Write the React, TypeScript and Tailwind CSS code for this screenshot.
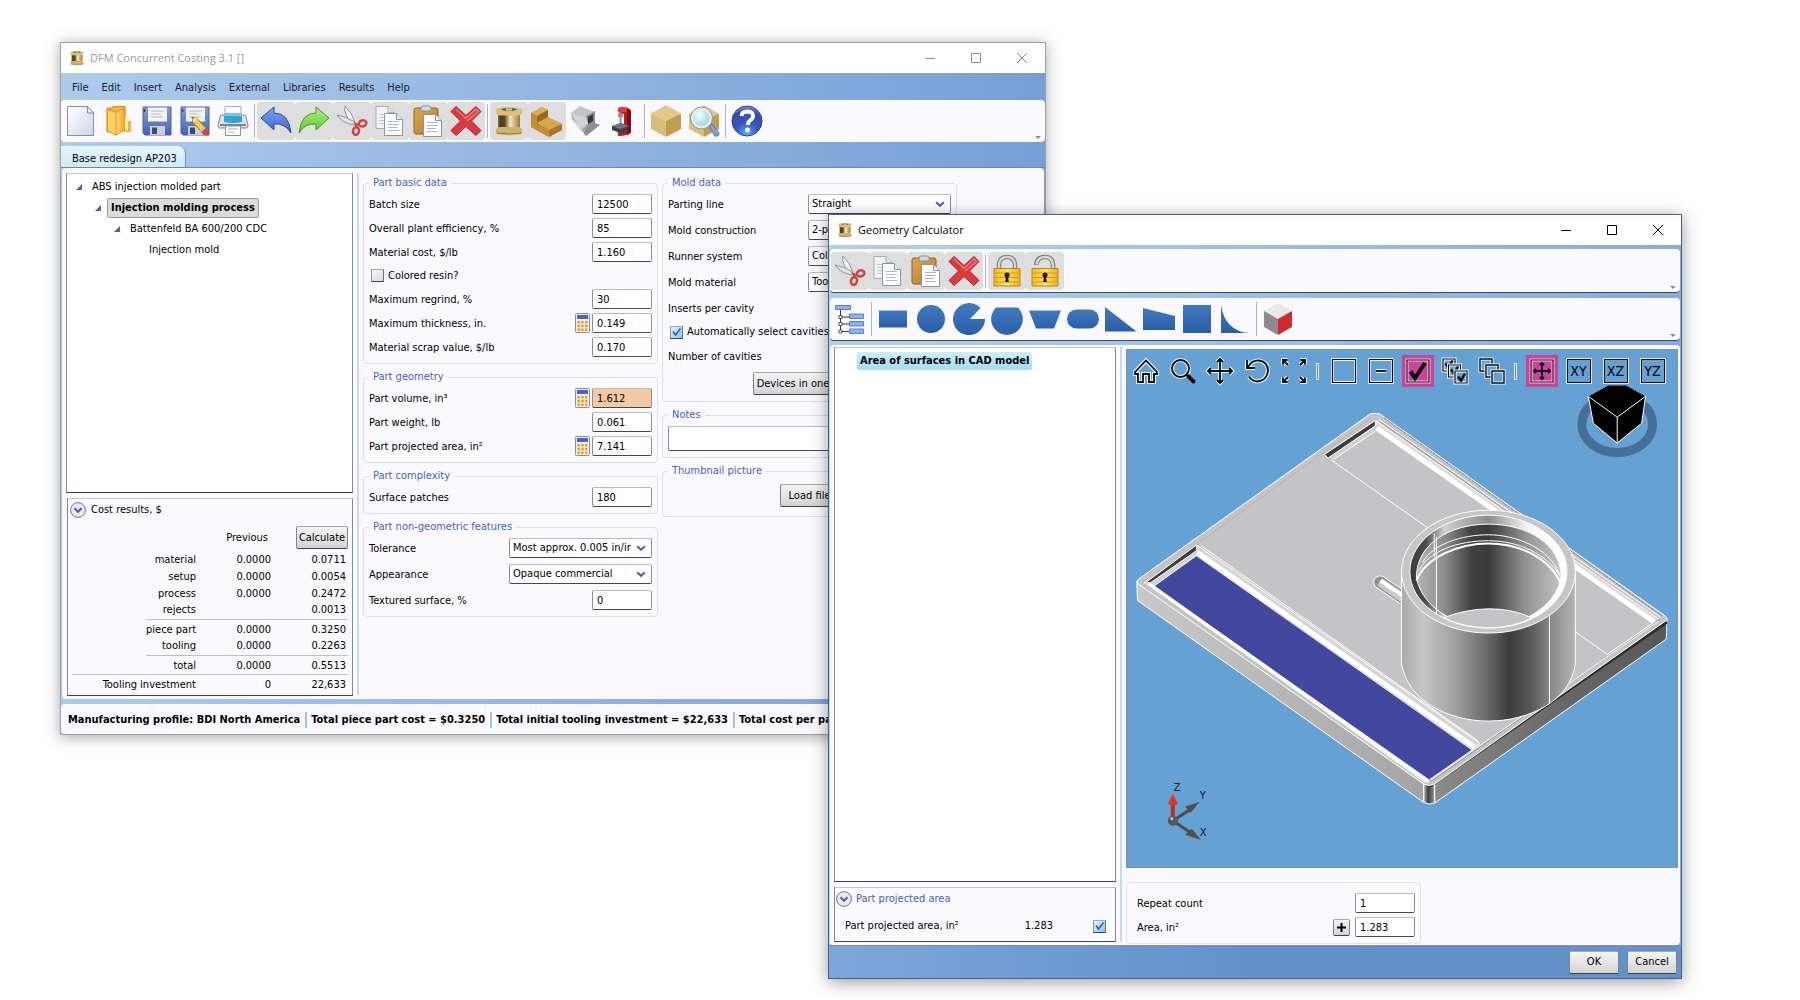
import { useId, useState } from 'react';
import type { ReactNode } from 'react';

type Tone = 'plain' | 'gray';

const boxClass =
  'h-5 rounded-[2px] border border-x-[#8b8e96] border-t-[#b9bbc2] border-b-[#45474f] px-1 text-[11px] leading-4 text-black outline-none';

const buttonClass =
  'flex items-center justify-center rounded-[2px] border border-x-[#808388] border-t-[#a5a7ab] border-b-[#3f4145] bg-gradient-to-b from-[#f4f4f4] via-[#e6e6e6] to-[#d2d2d2] text-[11px] leading-4 text-black whitespace-nowrap';

const panelClass = 'border border-x-[#84878f] border-t-[#c3c5cb] border-b-[#3f4148]';

/* ---------- shared gradients ---------- */

function Defs() {
  return (
    <svg className="absolute h-0 w-0" aria-hidden="true">
      <defs>
        <linearGradient id="spool" x1="0" x2="1">
          <stop offset="0" stopColor="#8a7038" />
          <stop offset=".12" stopColor="#4a3a1c" />
          <stop offset=".3" stopColor="#5a4724" />
          <stop offset=".55" stopColor="#f4e6b8" />
          <stop offset=".8" stopColor="#c9ae6c" />
          <stop offset="1" stopColor="#8f7438" />
        </linearGradient>
        <linearGradient id="paper" x1="0" y1="0" x2="1" y2="1">
          <stop offset="0" stopColor="#ffffff" />
          <stop offset="1" stopColor="#ccd6ee" />
        </linearGradient>
        <linearGradient id="folder" x1="0" x2="1">
          <stop offset="0" stopColor="#ffe08a" />
          <stop offset="1" stopColor="#f0a51c" />
        </linearGradient>
        <linearGradient id="floppy" x1="0" y1="0" x2="0" y2="1">
          <stop offset="0" stopColor="#7f9fdc" />
          <stop offset="1" stopColor="#4663ae" />
        </linearGradient>
        <linearGradient id="undo" x1="0" y1="0" x2="0" y2="1">
          <stop offset="0" stopColor="#7ea6ee" />
          <stop offset="1" stopColor="#3f63c4" />
        </linearGradient>
        <linearGradient id="redo" x1="0" y1="0" x2="0" y2="1">
          <stop offset="0" stopColor="#b6ee88" />
          <stop offset="1" stopColor="#5cc32c" />
        </linearGradient>
        <linearGradient id="clip" x1="0" y1="0" x2="1" y2="1">
          <stop offset="0" stopColor="#dca752" />
          <stop offset="1" stopColor="#b87a24" />
        </linearGradient>
        <linearGradient id="gold" x1="0" x2="1">
          <stop offset="0" stopColor="#f2b61d" />
          <stop offset=".5" stopColor="#ffe468" />
          <stop offset="1" stopColor="#eeb01c" />
        </linearGradient>
        <linearGradient id="shape" x1="0" y1="0" x2="0" y2="1">
          <stop offset="0" stopColor="#4179c0" />
          <stop offset="1" stopColor="#2a5fa6" />
        </linearGradient>
        <radialGradient id="help" cx=".5" cy=".9" r=".9">
          <stop offset="0" stopColor="#58b4f2" />
          <stop offset=".4" stopColor="#3957b8" />
          <stop offset=".8" stopColor="#3a4aa8" />
          <stop offset="1" stopColor="#7f97dc" />
        </radialGradient>
        <radialGradient id="glass" cx=".4" cy=".35" r=".7">
          <stop offset="0" stopColor="#f3ffff" />
          <stop offset="1" stopColor="#8fd0d8" />
        </radialGradient>
      </defs>
    </svg>
  );
}

/* ---------- toolbar icons ---------- */

function Icon({ children, className = 'h-8 w-8' }: { children: ReactNode; className?: string }) {
  return (
    <svg viewBox="0 0 32 32" className={className} fill="none" aria-hidden="true">
      {children}
    </svg>
  );
}

function SpoolArt() {
  return (
    <>
      <path d="M5 7h22v18H5z" fill="url(#spool)" />
      <path d="M3 3.500q13-3 26 0v5q-2 2-4 2H7q-2 0-4-2z" fill="#d9bf80" />
      <path d="M8 4q8-2 16 0-2 2-8 2T8 4z" fill="#6b5322" />
      <path d="M13 3.500h6v2h-6z" fill="#e8d59b" />
      <path d="M3 24q2-2 4-2h18q2 0 4 2v5q-13 2.500-26 0z" fill="#d0b373" />
      <path d="M4 28q12 2 24 0" stroke="#9a7b3c" />
    </>
  );
}

function FloppyArt() {
  return (
    <>
      <path d="M2 2h28v28H4l-2-2z" fill="url(#floppy)" stroke="#4a5f9e" />
      <path d="M7 2.500h19v14H7z" fill="#f4f4f4" />
      <path d="M10 6h13M10 9h10M10 12h12" stroke="#b8bcc6" />
      <path d="M9 21h15v9H9z" fill="#c9ced9" />
      <path d="M11 22.500h5V29h-5z" fill="#3c486e" />
      <path d="M3.500 4v3" stroke="#2b3b78" strokeWidth="1.500" />
    </>
  );
}

function PageArt() {
  return (
    <>
      <path d="M0 0h12l6 6v16H0z" fill="#fff" stroke="#8f939b" />
      <path d="M12 0v6h6" fill="#e8eaef" stroke="#8f939b" />
      <path d="M3.500 8h11M3.500 11h11M3.500 14h9M3.500 17h11" stroke="#a9b6cf" />
    </>
  );
}

const icons: Record<string, ReactNode> = {
  spool: <SpoolArt />,
  newFile: (
    <>
      <path d="M2.500 1.500h20l6 6.500v22.500h-26z" fill="url(#paper)" stroke="#8b8e96" />
      <path d="M22.500 1.500V8h6z" fill="#f1f2f5" stroke="#8b8e96" />
    </>
  ),
  open: (
    <>
      <path d="M21 16h7v11h-7z" fill="#f1b24a" />
      <path d="M4 3h5l1-1.500h12V25l-10 2H4z" fill="#f5b637" stroke="#d6891a" />
      <path d="M12 7l10-4v22l-10 5.500z" fill="url(#folder)" stroke="#dd9623" />
      <path d="M6 5.500h4M4.500 3.500L13 8v22L4.500 26z" fill="#fbd468" stroke="#dd9623" />
      <path d="M22 12l3 1v12l-3 1z" fill="#ffe7a6" />
    </>
  ),
  save: <FloppyArt />,
  saveAs: (
    <>
      <FloppyArt />
      <path d="M13 12l5 1.500 11 12-4 4-11-12z" fill="#f6ce3e" stroke="#8f7a35" />
      <path d="M13 12l5 1.500-3.500 4z" fill="#f6e7c6" />
      <path d="M13 12l2 .7-1.200 1.400z" fill="#333" />
      <path d="M26.500 23l3.500 4q.5 2-1.500 3.500-2 .5-3-.5l-3-3z" fill="#d9433f" />
      <path d="M25 21.500l1.500 1.500-4 4-1.500-1.500z" fill="#b9c1d4" />
    </>
  ),
  print: (
    <>
      <path d="M8 1.500h16V10H8z" fill="#fff" stroke="#a5a9b2" />
      <path d="M3 12q0-2 2-2h22q2 0 2 2l2 8q0 3-2 3H3q-2 0-2-3z" fill="#dfe2e8" stroke="#80858f" />
      <path d="M7 8h18v9q-9 2-18 0z" fill="#37a3cf" />
      <path d="M7 8h18v3H7z" fill="#6fc8e8" />
      <path d="M3 20h26" stroke="#7d828c" strokeWidth="2" />
      <path d="M8.500 21h15v9.500h-15z" fill="#fff" stroke="#8b8f98" />
      <path d="M11 24h10M11 27h7" stroke="#a9adb6" />
    </>
  ),
  undo: (
    <path
      d="M1 13L14 2v6q15 0 17 20-6-10-17-9v6z"
      fill="url(#undo)"
      stroke="#2c4a9e"
      strokeLinejoin="round"
    />
  ),
  redo: (
    <path
      d="M31 13L18 2v6Q3 8 1 28q6-10 17-9v6z"
      fill="url(#redo)"
      stroke="#3f9d22"
      strokeLinejoin="round"
    />
  ),
  cut: (
    <>
      <path d="M9 1q-2 7 7 18l3-2Q16 8 9 1z" fill="#f2f4f5" stroke="#8f9599" />
      <path d="M1 10q5 8 17 10l1-3Q9 11 1 10z" fill="#e2e5e7" stroke="#8f9599" />
      <ellipse cx="26.500" cy="18.500" rx="3.800" ry="3" transform="rotate(-15 26 18)" stroke="#d0413f" strokeWidth="2.500" />
      <ellipse cx="20" cy="26" rx="3" ry="3.800" transform="rotate(15 20 26)" stroke="#d0413f" strokeWidth="2.500" />
      <path d="M17 17l6 2-3 3.500z" fill="#d0413f" />
    </>
  ),
  copy: (
    <>
      <g transform="translate(2 1.500)" opacity=".65">
        <PageArt />
      </g>
      <g transform="translate(10.500 8.500)">
        <PageArt />
      </g>
    </>
  ),
  paste: (
    <>
      <path d="M2 5q0-2 2-2h20q2 0 2 2v22q0 2-2 2H4q-2 0-2-2z" fill="url(#clip)" stroke="#8f6322" />
      <path d="M9 3q0-2 2-2h6q2 0 2 2v3H9z" fill="#d4d7db" stroke="#8d9197" />
      <g transform="translate(11.500 9.500)">
        <PageArt />
      </g>
    </>
  ),
  remove: (
    <>
      <path
        d="M6 1.500l10 9 10-9 5 5-9.500 9.500 9.500 9.500-5 5-10-9-10 9-5-5L10.500 16 1 6.500z"
        fill="#d93a3f"
        stroke="#a92429"
        strokeLinejoin="round"
      />
      <path d="M6 4l10 9.500L26 4l2.500 2.500L17 16" stroke="#ec7b7d" strokeWidth="1.500" />
    </>
  ),
  step: (
    <>
      <path d="M0 8l11-6 6 3v8l14 6v6l-13 7L0 22z" fill="#b07d2c" />
      <path d="M0 8l11-6 6 3-11 6z" fill="#dcae5b" />
      <path d="M6 11l11-6v8l-11 6z" fill="#9a6a20" />
      <path d="M6 18l11-6 14 7-13 6z" fill="#d8a64c" />
      <path d="M18 25l13-6v6l-13 7z" fill="#a8752a" />
      <path d="M0 8l6 3v8l12 6v7L0 22z" fill="#c58f38" />
    </>
  ),
  extrusion: (
    <>
      <path d="M2 8l9-7 15 6-8 6z" fill="#c3c6c9" />
      <path d="M2 8l16 5v6l12 0-13 12L3 14z" fill="#a5a8ab" />
      <path d="M2 8l16 5v6L11 26z" fill="#d2d4d6" />
      <path d="M17 11l9-5v12l5 2-14 11-2-3 4-8z" fill="#8c8f92" />
      <path d="M19 12l5-3v7l-5 3z" fill="#33363a" />
    </>
  ),
  clamp: (
    <>
      <path d="M11 3q8-3 13 2v22q-2 4-13 4v-4l6-2V9l-6-2z" fill="#c0161d" />
      <path d="M20 4q4 2 4 4v19q-1 2-4 3z" fill="#7c0b10" />
      <path d="M11 3q5-2 9 0v4h-9z" fill="#e33a3c" />
      <path d="M11 8h5v4h-5zM12.500 12h2v7h-2z" fill="#8f9498" />
      <path d="M5 21l9-3 8 3-2 5-7 2-8-3z" fill="#3d4246" />
      <path d="M5 21l9-3 8 3-9 3z" fill="#70777c" />
    </>
  ),
  block: (
    <>
      <path d="M16 0l15 8.500L16 16 1 8.500z" fill="#e2c98a" />
      <path d="M1 8.500L16 16v16L1 24z" fill="#d9bd7c" />
      <path d="M31 8.500L16 16v16l15-8z" fill="#c09c55" />
    </>
  ),
  inspect: (
    <>
      <path d="M1 8.500L16 0l15 8.500L16 16z" fill="#e2c98a" />
      <path d="M1 8.500L16 16v16L1 24z" fill="#d9bd7c" />
      <path d="M31 8.500L16 16v16l15-8z" fill="#c09c55" />
      <path d="M21 21l3-2 7 9q0 4-4 3z" fill="#7ba4e4" stroke="#5674b4" />
      <circle cx="13.500" cy="13" r="9.500" fill="url(#glass)" stroke="#e9ecee" strokeWidth="3" />
      <circle cx="13.500" cy="13" r="11" stroke="#8c9298" />
    </>
  ),
  help: (
    <>
      <circle cx="16" cy="16" r="15" fill="url(#help)" stroke="#2f3f92" />
      <path d="M10.500 11q.5-4.500 6-4.500 5.500.3 5.500 4.500 0 2.500-3 4.500-2.200 1.500-2.200 4.500" stroke="#fff" strokeWidth="3.800" />
      <circle cx="16.600" cy="25" r="2.400" fill="#fff" />
    </>
  ),
  locked: (
    <>
      <path d="M8 15V9q1-7 8-7t8 7v6" stroke="#777b7e" strokeWidth="4.500" />
      <path d="M8 15V9q1-7 8-7t8 7v6" stroke="#d2d6d8" strokeWidth="2.500" />
      <path d="M3 13.500h26V31H3z" fill="url(#gold)" stroke="#bd8412" />
      <path d="M3 18h26M3 22.500h26M3 27h26" stroke="#d49a18" />
      <circle cx="16" cy="20" r="2.600" fill="#222" />
      <path d="M15 21h2l.8 6h-3.600z" fill="#222" />
    </>
  ),
  unlocked: (
    <>
      <path d="M7 10q1-8 9-8t8 8v5" stroke="#777b7e" strokeWidth="4.500" />
      <path d="M7.500 9.500Q8.500 2 16 2t8 8v5" stroke="#d2d6d8" strokeWidth="2.500" />
      <path d="M3 13.500h26V31H3z" fill="url(#gold)" stroke="#bd8412" />
      <path d="M3 18h26M3 22.500h26M3 27h26" stroke="#d49a18" />
      <circle cx="16" cy="20" r="2.600" fill="#222" />
      <path d="M15 21h2l.8 6h-3.600z" fill="#222" />
    </>
  ),
  hierarchy: (
    <>
      <path d="M6.500 7v21M6.500 14h10M6.500 21h10M6.500 28.500h10" stroke="#333" />
      <path d="M1.500 2.500h15v4h-15zM15.500 11h14v4.500h-14zM15.500 18.500h14V23h-14zM15.500 26h14v4.500h-14z" fill="#8fb1ee" stroke="#5d7fc8" />
      <path d="M5 12.500h3v3H5zM5 19.500h3v3H5zM5 27h3v3H5z" fill="#fff" stroke="#555" />
    </>
  ),
  rectangle: <path d="M2 7.500h28v17H2z" fill="url(#shape)" />,
  circle: <circle cx="16" cy="16" r="14" fill="url(#shape)" />,
  sector: <path d="M17 16L27.500 5A16 16 0 1 0 32 16z" fill="url(#shape)" />,
  segment: <path d="M5 4.500h22A16 16 0 0 1 16 32 16 16 0 0 1 5 4.500z" fill="url(#shape)" />,
  trapezoid: <path d="M0 7.500h32l-7 18H7z" fill="url(#shape)" />,
  slot: <rect y="6.500" width="32" height="19" rx="9.500" fill="url(#shape)" />,
  triangle: <path d="M0 4v24.500h31.500z" fill="url(#shape)" />,
  wedge: <path d="M0 5l32 8v14H0z" fill="url(#shape)" />,
  square: <path d="M2 2h28v28H2z" fill="url(#shape)" />,
  fillet: <path d="M2 2v28h28Q6 28 2 2z" fill="url(#shape)" />,
  redCube: (
    <>
      <path d="M16 0l14 8-14 8L2 8z" fill="#e9e9e9" />
      <path d="M2 8l14 8v16L2 24z" fill="#8c8c8c" />
      <path d="M30 8l-14 8v16l14-8z" fill="#cc2c30" />
    </>
  ),
};

function ToolButton({ name, label, tone = 'plain' }: { name: string; label: string; tone?: Tone }) {
  return (
    <button
      type="button"
      aria-label={label}
      className={`flex h-[38px] w-[38px] shrink-0 items-center justify-center rounded ${tone === 'gray' ? 'bg-[#dededf]' : ''}`}
    >
      <Icon>{icons[name]}</Icon>
    </button>
  );
}

function ToolSeparator() {
  return <span className="mx-0.5 h-[34px] w-px shrink-0 bg-[#a9b4c4]" />;
}

function OverflowArrow() {
  return (
    <span className="ml-auto flex h-full items-end pr-1 pb-[3px]">
      <svg viewBox="0 0 6 3" className="h-[3px] w-1.5" aria-hidden="true">
        <path d="M0 0h6L3 3z" fill="#8a8e96" />
      </svg>
    </span>
  );
}

/* ---------- window chrome ---------- */

function TitleBar({ title, active }: { title: string; active: boolean }) {
  const controls = [
    { label: 'Minimize', d: 'M1 6.500h10' },
    { label: 'Maximize', d: 'M1.500 1.500h9v9h-9z' },
    { label: 'Close', d: 'M1 1l10 10M11 1L1 11' },
  ];
  return (
    <header className="flex h-[30px] shrink-0 items-center bg-white pl-2">
      <Icon className="h-4 w-4">
        <SpoolArt />
      </Icon>
      <h1
        className={`ml-[5px] flex-1 truncate font-['Open_Sans','Noto_Sans',sans-serif] text-[11px] leading-4 ${active ? 'text-black' : 'text-[#9a9a9a]'}`}
      >
        {title}
      </h1>
      {controls.map((c) => (
        <button
          key={c.label}
          type="button"
          aria-label={c.label}
          className={`flex h-full w-[46px] items-center justify-center ${active ? 'text-black' : 'text-[#8c8c8c]'}`}
        >
          <svg viewBox="0 0 12 12" className="h-3 w-3" fill="none" stroke="currentColor" aria-hidden="true">
            <path d={c.d} />
          </svg>
        </button>
      ))}
    </header>
  );
}

/* ---------- form parts ---------- */

function Group({ title, children, className = 'gap-1' }: { title: string; children: ReactNode; className?: string }) {
  return (
    <fieldset className="rounded border border-[#d9deec] px-[5px] pt-[3px] pb-1.5">
      <legend className="px-1 text-[11px] leading-4 text-[#4763bd]">{title}</legend>
      <div className={`flex flex-col ${className}`}>{children}</div>
    </fieldset>
  );
}

function CalculatorButton({ label }: { label: string }) {
  return (
    <button type="button" aria-label={label} className="mr-0.5 h-5 w-[15px] shrink-0">
      <svg viewBox="0 0 15 20" className="h-full w-full" aria-hidden="true">
        <rect x=".5" y=".5" width="14" height="19" rx="1" fill="#f0ede4" stroke="#8d8f96" />
        <path d="M2 2h11v4H2z" fill="#4866b8" />
        <path
          d="M2.500 8h2.500v2.500H2.500zM6.200 8h2.500v2.500H6.200zM10 8h2.500v2.500H10zM2.500 11.700h2.500v2.500H2.500zM6.200 11.700h2.500v2.500H6.200zM10 11.700h2.500v2.500H10zM2.500 15.400h2.500v2.500H2.500zM6.200 15.400h2.500v2.500H6.200zM10 15.400h2.500v2.500H10z"
          fill="#e0a136"
        />
      </svg>
    </button>
  );
}

interface FieldProps {
  label: string;
  value: string;
  calculator?: boolean;
  highlight?: boolean;
}

function Field({ label, value, calculator, highlight }: FieldProps) {
  const id = useId();
  return (
    <div className="flex h-5 items-center">
      <label htmlFor={id} className="flex-1 pt-0.5 text-[11px] leading-4">
        {label}
      </label>
      {calculator && <CalculatorButton label={`Calculate ${label}`} />}
      <input id={id} defaultValue={value} className={`${boxClass} w-[60px] ${highlight ? 'bg-[#f3c8a3]' : 'bg-white'}`} />
    </div>
  );
}

function SelectField({ label, value }: { label: string; value: string }) {
  const id = useId();
  return (
    <div className="flex h-5 items-center">
      <label htmlFor={id} className="flex-1 pt-0.5 text-[11px] leading-4">
        {label}
      </label>
      <div className="relative w-[143px]">
        <select id={id} defaultValue={value} className={`${boxClass} block w-full appearance-none bg-white pr-5 pl-[3px]`}>
          <option>{value}</option>
        </select>
        <svg viewBox="0 0 10 7" className="pointer-events-none absolute top-[7px] right-1.5 h-[7px] w-2.5" fill="none" aria-hidden="true">
          <path d="M1.200 1.200L5 4.800l3.800-3.600" stroke="#4664bf" strokeWidth="2.200" />
        </svg>
      </div>
    </div>
  );
}

function CheckField({ label, initial = false }: { label: string; initial?: boolean }) {
  const [checked, setChecked] = useState(initial);
  return (
    <label className="flex items-center gap-1 pl-0.5 text-[11px] leading-4">
      <CheckBox checked={checked} onChange={setChecked} />
      {label}
    </label>
  );
}

function CheckBox({ checked, onChange, label }: { checked: boolean; onChange: (v: boolean) => void; label?: string }) {
  return (
    <span className="relative h-[13px] w-[13px] shrink-0">
      <input
        type="checkbox"
        aria-label={label}
        checked={checked}
        onChange={(e) => onChange(e.target.checked)}
        className="block h-full w-full appearance-none border border-t-[#a4a7ac] border-r-[#6e7176] border-b-[#3f4247] border-l-[#8f9297] bg-gradient-to-br from-[#fbfbfb] to-[#d8d8dc] checked:from-[#dff4ff] checked:to-[#86c6ea]"
      />
      {checked && (
        <svg viewBox="0 0 13 13" className="pointer-events-none absolute inset-0" fill="none" aria-hidden="true">
          <path d="M3 5.500l2.500 3.500L10.500 2.500" stroke="#3f63c0" strokeWidth="1.800" />
        </svg>
      )}
    </span>
  );
}

function Expander({ label }: { label: string }) {
  return (
    <button type="button" aria-label={label} className="h-4 w-4 shrink-0">
      <svg viewBox="0 0 16 16" className="h-full w-full" fill="none" aria-hidden="true">
        <circle cx="8" cy="8" r="7.400" fill="#e9eaee" stroke="#75787e" />
        <path d="M4.500 6.200L8 9.700l3.500-3.500" stroke="#3f63c0" strokeWidth="2.200" />
      </svg>
    </button>
  );
}

/* ---------- main window ---------- */

const menus = ['File', 'Edit', 'Insert', 'Analysis', 'External', 'Libraries', 'Results', 'Help'];

const statusItems = [
  'Manufacturing profile: BDI North America',
  'Total piece part cost = $0.3250',
  'Total initial tooling investment = $22,633',
  'Total cost per part = $0.5513',
];

interface CostRow {
  label: string;
  previous: string;
  current: string;
  line?: boolean;
}

const costRows: CostRow[] = [
  { label: 'material', previous: '0.0000', current: '0.0711' },
  { label: 'setup', previous: '0.0000', current: '0.0054' },
  { label: 'process', previous: '0.0000', current: '0.2472' },
  { label: 'rejects', previous: '', current: '0.0013' },
  { label: 'piece part', previous: '0.0000', current: '0.3250', line: true },
  { label: 'tooling', previous: '0.0000', current: '0.2263' },
  { label: 'total', previous: '0.0000', current: '0.5513', line: true },
];

function TreeMarker() {
  return (
    <svg viewBox="0 0 6 6" className="h-1.5 w-1.5 shrink-0" aria-hidden="true">
      <path d="M6 0v6H0z" fill="#4763b8" />
    </svg>
  );
}

function ProcessTree() {
  return (
    <ul className={`${panelClass} min-h-0 flex-1 bg-white pt-0.5 text-[11px] leading-4`}>
      <li className="flex h-[21px] items-center gap-[10px] pl-[9px]">
        <TreeMarker />
        ABS injection molded part
      </li>
      <li className="flex h-[21px] items-center gap-1.5 pl-[28px]">
        <TreeMarker />
        <span className="flex h-5 items-center rounded-[2px] border border-[#9a9a9a] bg-[#dcdcdc] px-[3px] font-bold">
          Injection molding process
        </span>
      </li>
      <li className="flex h-[21px] items-center gap-[10px] pl-[47px]">
        <TreeMarker />
        Battenfeld BA 600/200 CDC
      </li>
      <li className="flex h-[21px] items-center pl-[82px]">Injection mold</li>
    </ul>
  );
}

function CostResults() {
  const lineClass = 'border-t border-[#b9c1cf] pt-0.5';
  return (
    <section className={`${panelClass} ml-px w-[286px] px-1 pt-[3px] pb-0.5`}>
      <div className="flex items-center gap-[5px]">
        <span className="-ml-0.5 flex">
          <Expander label="Collapse cost results" />
        </span>
        <h2 className="text-[11px] leading-4">Cost results, $</h2>
      </div>
      <table className="mt-2 w-full table-fixed border-collapse text-right text-[11px] leading-4">
        <colgroup>
          <col className="w-[74px]" />
          <col />
          <col className="w-[75px]" />
          <col className="w-[76px]" />
        </colgroup>
        <thead>
          <tr className="h-[25px] align-top">
            <td />
            <td />
            <th className="pt-1 pr-1 font-normal">Previous</th>
            <th className="font-normal">
              <button type="button" className={`${buttonClass} ml-auto h-[23px] w-[52px]`}>
                Calculate
              </button>
            </th>
          </tr>
        </thead>
        <tbody>
          {costRows.map((row) => (
            <tr key={row.label} className={row.line ? 'h-[19px]' : 'h-[17px]'}>
              <td />
              <th className={`pr-px font-normal whitespace-nowrap ${row.line ? lineClass : ''}`}>{row.label}</th>
              <td className={`pr-px ${row.line ? lineClass : ''}`}>{row.previous}</td>
              <td className={`pr-0.5 ${row.line ? lineClass : ''}`}>{row.current}</td>
            </tr>
          ))}
          <tr className="h-[19px] border-t border-[#b9c1cf]">
            <th colSpan={2} className="pt-0.5 pr-px font-normal">
              Tooling investment
            </th>
            <td className="pt-0.5 pr-px">0</td>
            <td className="pt-0.5 pr-0.5">22,633</td>
          </tr>
        </tbody>
      </table>
    </section>
  );
}

function PartColumn() {
  return (
    <div className="flex w-[295px] shrink-0 flex-col gap-[5px]">
      <Group title="Part basic data">
        <Field label="Batch size" value="12500" />
        <Field label="Overall plant efficiency, %" value="85" />
        <Field label="Material cost, $/lb" value="1.160" />
        <div className="flex h-[19px] items-center">
          <CheckField label="Colored resin?" />
        </div>
        <Field label="Maximum regrind, %" value="30" />
        <Field label="Maximum thickness, in." value="0.149" calculator />
        <Field label="Material scrap value, $/lb" value="0.170" />
      </Group>
      <Group title="Part geometry">
        <Field label="Part volume, in³" value="1.612" calculator highlight />
        <Field label="Part weight, lb" value="0.061" />
        <Field label="Part projected area, in²" value="7.141" calculator />
      </Group>
      <Group title="Part complexity">
        <Field label="Surface patches" value="180" />
      </Group>
      <Group title="Part non-geometric features" className="gap-1.5">
        <SelectField label="Tolerance" value="Most approx. 0.005 in/in" />
        <SelectField label="Appearance" value="Opaque commercial" />
        <Field label="Textured surface, %" value="0" />
      </Group>
    </div>
  );
}

function MoldColumn() {
  return (
    <div className="flex w-[295px] shrink-0 flex-col gap-[5px]">
      <Group title="Mold data" className="gap-1.5">
        <SelectField label="Parting line" value="Straight" />
        <SelectField label="Mold construction" value="2-plate" />
        <SelectField label="Runner system" value="Cold runner" />
        <SelectField label="Mold material" value="Tool steel" />
        <Field label="Inserts per cavity" value="0" />
        <div className="flex h-4 items-center">
          <CheckField label="Automatically select cavities?" initial />
        </div>
        <Field label="Number of cavities" value="1" />
        <button type="button" className={`${buttonClass} mx-auto h-[23px] px-[3px]`}>
          Devices in one cavity
        </button>
      </Group>
      <Group title="Notes">
        <textarea aria-label="Notes" className={`${boxClass} h-[25px] w-full resize-none bg-white`} />
      </Group>
      <Group title="Thumbnail picture" className="pt-0.5 pb-[3px]">
        <button type="button" className={`${buttonClass} mx-auto h-[23px] px-2`}>
          Load file
        </button>
      </Group>
    </div>
  );
}

function MainWindow() {
  return (
    <section className="absolute top-[42px] right-[41.9%] bottom-[26.5%] left-[60px] flex flex-col overflow-hidden border border-[#9b9ea4] bg-gradient-to-r from-[#aecbec] to-[#779fd6] shadow-[0_2px_14px_rgba(0,0,0,0.35)]">
      <TitleBar title="DFM Concurrent Costing 3.1 []" active={false} />
      <nav className="flex h-[27px] shrink-0 items-center gap-[13px] pt-0.5 pl-[11px]">
        {menus.map((m) => (
          <button key={m} type="button" className="text-[11px] leading-4 text-[#16202e]">
            {m}
          </button>
        ))}
      </nav>
      <div className="flex h-[42px] shrink-0 items-center rounded bg-[#fafafe] pl-px">
        <ToolButton name="newFile" label="New" />
        <ToolButton name="open" label="Open" />
        <ToolButton name="save" label="Save" />
        <ToolButton name="saveAs" label="Save as" />
        <ToolButton name="print" label="Print" />
        <ToolSeparator />
        <ToolButton name="undo" label="Undo" tone="gray" />
        <ToolButton name="redo" label="Redo" tone="gray" />
        <ToolButton name="cut" label="Cut" tone="gray" />
        <ToolButton name="copy" label="Copy" tone="gray" />
        <ToolButton name="paste" label="Paste" tone="gray" />
        <ToolButton name="remove" label="Delete" tone="gray" />
        <ToolSeparator />
        <ToolButton name="spool" label="Part" tone="gray" />
        <ToolButton name="step" label="Process" tone="gray" />
        <ToolButton name="extrusion" label="Profile" />
        <ToolButton name="clamp" label="Operation" />
        <ToolSeparator />
        <ToolButton name="block" label="Model" />
        <ToolButton name="inspect" label="Inspect model" />
        <ToolSeparator />
        <ToolButton name="help" label="Help" />
        <OverflowArrow />
      </div>
      <div className="flex h-[26px] shrink-0 items-end border-b border-[#7088a8]">
        <button
          type="button"
          className="h-[21px] rounded-tr-lg border-r border-[#6f8fb5] bg-gradient-to-b from-[#e6f6fe] to-[#cfeafb] pt-1 pr-2 pl-[11px] text-[11px] leading-4"
        >
          Base redesign AP203
        </button>
      </div>
      <div className="mx-px flex min-h-0 flex-1 gap-1 overflow-hidden rounded-sm bg-[#f9f9fe] pl-1">
        <div className="flex w-[287px] shrink-0 flex-col gap-[5px] pt-[5px] pb-[3px]">
          <ProcessTree />
          <CostResults />
        </div>
        <div className="mt-[5px] mb-1 w-0.5 shrink-0 bg-[#c1dbf4]" />
        <div className="flex gap-1 pt-[7px]">
          <PartColumn />
          <MoldColumn />
        </div>
      </div>
      <footer className="mt-[5px] flex h-[30px] shrink-0 items-center overflow-hidden rounded bg-[#fafafe] pt-0.5 pl-[7px] text-[11px] leading-4 font-bold">
        {statusItems.map((s, i) => (
          <span
            key={s}
            className={`shrink-0 ${i > 0 ? 'ml-[5px] border-l-2 border-[#8fcbe8] pl-1' : ''}`}
          >
            {s}
          </span>
        ))}
      </footer>
    </section>
  );
}

/* ---------- 3D view ---------- */

function Outlined({ d, thin = false }: { d: string; thin?: boolean }) {
  return (
    <>
      <path d={d} stroke="#fff" strokeWidth={thin ? 3 : 4} opacity=".85" />
      <path d={d} stroke="#0b0b0b" strokeWidth={thin ? 1.200 : 1.800} />
    </>
  );
}

const viewTools: { label: string; art: ReactNode; pink?: boolean; gapBefore?: boolean }[] = [
  { label: 'Home', art: <Outlined d="M5 17L16 5.500 27 17v2h-3v8h-5v-8h-6v8H8v-8H5z" /> },
  {
    label: 'Zoom',
    art: (
      <>
        <Outlined d="M22 13.500a8.500 8.500 0 1 1-17 0 8.500 8.500 0 0 1 17 0zM20 20l8 8" />
        <path d="M20.500 20.500l7 7" stroke="#0b0b0b" strokeWidth="4" />
      </>
    ),
  },
  { label: 'Pan', art: <Outlined d="M16 4v24M4 16h24M13 7l3-3 3 3M13 25l3 3 3-3M7 13l-3 3 3 3M25 13l3 3-3 3" /> },
  { label: 'Rotate', art: <Outlined d="M6 5v8h8M7 12q4-7 11-6.500 9 1.500 9 10.500-1 9-10 10.500-6 0-9-5" /> },
  {
    label: 'Fit',
    art: <Outlined d="M5 9.500V5h4.500M5 5l5 5M22.500 5H27v4.500M27 5l-5 5M5 22.500V27h4.500M5 27l5-5M22.500 27H27v-4.500M27 27l-5-5" />,
  },
  { label: 'Wireframe', art: <Outlined thin d="M4.500 4.500h23v23h-23z" />, gapBefore: true },
  {
    label: 'Deselect',
    art: (
      <>
        <Outlined thin d="M4.500 4.500h23v23h-23z" />
        <Outlined d="M11 16h10" />
      </>
    ),
  },
  {
    label: 'Select',
    pink: true,
    art: (
      <>
        <path d="M5 5h22v22H5z" stroke="#fff" strokeWidth="3" opacity=".7" />
        <path d="M5 5h22v22H5z" stroke="#2b1222" strokeWidth="1.200" />
        <path d="M8.500 16.500l4.500 6.500L23 8" stroke="#0b0b0b" strokeWidth="4" />
      </>
    ),
  },
  {
    label: 'Select all',
    art: (
      <>
        <path d="M4 4h12v12H4z" fill="#65a1d3" stroke="#fff" strokeWidth="3" />
        <path d="M4 4h12v12H4z" stroke="#0b0b0b" strokeWidth="1.200" />
        <path d="M6.500 8.500l3 4 4-7" stroke="#0b0b0b" strokeWidth="2.200" />
        <path d="M9.500 10h12v12h-12z" fill="#65a1d3" stroke="#fff" strokeWidth="3" />
        <path d="M9.500 10h12v12h-12z" stroke="#0b0b0b" strokeWidth="1.200" />
        <path d="M12 14.500l3 4 4-7" stroke="#0b0b0b" strokeWidth="2.200" />
        <path d="M16 16h12v12H16z" fill="#65a1d3" stroke="#fff" strokeWidth="3" />
        <path d="M16 16h12v12H16z" stroke="#0b0b0b" strokeWidth="1.200" />
        <path d="M19 21.500l3 4 4-7" stroke="#0b0b0b" strokeWidth="2.500" />
      </>
    ),
  },
  {
    label: 'Deselect all',
    art: (
      <>
        {[4, 10, 16].map((p) => (
          <g key={p}>
            <path d={`M${p} ${p}h12v12h-12z`} fill="#65a1d3" stroke="#fff" strokeWidth="3" />
            <path d={`M${p} ${p}h12v12h-12z`} stroke="#0b0b0b" strokeWidth="1.400" />
          </g>
        ))}
      </>
    ),
  },
  {
    label: 'Free rotation',
    pink: true,
    gapBefore: true,
    art: (
      <>
        <path d="M5 5h22v22H5z" stroke="#fff" strokeWidth="3" opacity=".7" />
        <path d="M5 5h22v22H5z" stroke="#2b1222" strokeWidth="1.200" />
        <path d="M16 8v16M8 16h16M14 10l2-2 2 2M14 22l2 2 2-2M10 14l-2 2 2 2M22 14l2 2-2 2" stroke="#0b0b0b" strokeWidth="1.800" />
      </>
    ),
  },
];

function ViewToolbar() {
  return (
    <div className="absolute inset-x-0 top-[5px] flex h-8 items-center">
      {viewTools.map((t) => (
        <div key={t.label} className="flex items-center">
          {t.gapBefore && <span className="mr-[6px] ml-1 h-[17px] w-[3px] border border-[#e6e6e6] bg-[#7f8a94]" />}
          <button type="button" aria-label={t.label} className="flex w-[37px] justify-center">
            <span className={t.pink ? 'bg-[#c9459b]' : ''}>
              <Icon>{t.art}</Icon>
            </span>
          </button>
        </div>
      ))}
      {['XY', 'XZ', 'YZ'].map((plane) => (
        <button key={plane} type="button" className="flex w-[37px] justify-center">
          <span className="flex h-[26px] w-[26px] items-center justify-center border border-[#e4e4e4]">
            <span className="flex h-6 w-6 items-center justify-center border border-[#0b0b0b] text-sm leading-4">{plane}</span>
          </span>
        </button>
      ))}
    </div>
  );
}

function PartModel() {
  return (
    <svg viewBox="0 0 552 518" className="absolute inset-0 h-full w-full" fill="none" role="img" aria-label="Part model">
      <defs>
        <linearGradient id="outerWall" x1="0" x2="1">
          <stop offset="0" stopColor="#a9a9a9" />
          <stop offset=".12" stopColor="#c6c6c6" />
          <stop offset=".3" stopColor="#a3a3a3" />
          <stop offset=".5" stopColor="#666" />
          <stop offset=".62" stopColor="#3c3c3c" />
          <stop offset=".76" stopColor="#5e5e5e" />
          <stop offset=".85" stopColor="#868686" />
          <stop offset="1" stopColor="#b5b5b5" />
        </linearGradient>
        <linearGradient id="innerWall" x1="0" x2="1">
          <stop offset="0" stopColor="#b4b4b4" />
          <stop offset=".2" stopColor="#8b8b8b" />
          <stop offset=".38" stopColor="#414141" />
          <stop offset=".5" stopColor="#3a3a3a" />
          <stop offset=".75" stopColor="#929292" />
          <stop offset="1" stopColor="#c4c4c4" />
        </linearGradient>
        <linearGradient id="chamfer" x1="0" x2="1">
          <stop offset="0" stopColor="#3b3b3b" />
          <stop offset=".1" stopColor="#4b4b4b" />
          <stop offset=".22" stopColor="#d0d0d0" />
          <stop offset=".5" stopColor="#8c8c8c" />
          <stop offset=".75" stopColor="#f6f6f6" />
          <stop offset="1" stopColor="#fff" />
        </linearGradient>
        <linearGradient id="leftSide" x1="0" x2="1">
          <stop offset="0" stopColor="#c9c9c9" />
          <stop offset=".5" stopColor="#b7b7b7" />
          <stop offset="1" stopColor="#a5a5a5" />
        </linearGradient>
        <linearGradient id="rightSide" x1="0" x2="1">
          <stop offset="0" stopColor="#8b8b8b" />
          <stop offset=".5" stopColor="#6a6a6a" />
          <stop offset="1" stopColor="#575757" />
        </linearGradient>
        <linearGradient id="corner" x1="0" x2="1">
          <stop offset="0" stopColor="#bbb" />
          <stop offset=".4" stopColor="#3c3c3c" />
          <stop offset="1" stopColor="#999" />
        </linearGradient>
      </defs>

      {/* orientation cube */}
      <ellipse cx="492" cy="74" rx="35.500" ry="28.500" stroke="#456f94" strokeWidth="9" />
      <path d="M463 46l20-11h18l19.500 11-4 27L492 93l-24-20z" fill="#000" />
      <path d="M463 46l29 21 28.500-21M492 67v26M463 46l5 27 24 20 24.500-20 4-27" stroke="#fff" />
      <path d="M463 46l20-11h18l19.500 11" stroke="#fff" strokeDasharray="1 1" opacity=".6" />

      <g
        transform="translate(-7 31) scale(.365 .33333)"
        stroke="#fff"
        strokeLinejoin="round"
        className="[&_*]:[vector-effect:non-scaling-stroke]"
      >
        {/* plate sides */}
        <path d="M46 602L48 660 835 1268 835 1212z" fill="url(#leftSide)" />
        <path d="M865 1212L865 1270 1502 776 1504 715z" fill="url(#rightSide)" />
        <path d="M835 1212v55q15 10 30 3v-58z" fill="url(#corner)" />
        <path d="M850 1220L1504 725" stroke="#2b2b2b" strokeWidth="3" />

        {/* plate top */}
        <path d="M58 590L688 98q12-4 26 0L1496 704q12 9 6 16L864 1213q-14 8-28 0L50 610q-8-10 8-20z" fill="#c4c4c6" />
        <path d="M210 492L688 112" stroke="#b4b4b4" />
        <path d="M74 606L836 1198q14 8 28 0L1483 718 716 122" stroke="#8e8e8e" />
        <path d="M726 110L1490 706" stroke="#7d7d7d" strokeDasharray="3 1" />
        <path d="M66 604L840 1208M86 610L850 1206M855 1200L1480 722" />

        {/* slots */}
        <path d="M562 222L702 116V146L586 236z" fill="#d0d0d0" stroke="none" />
        <path d="M562 220L702 118V134L572 231z" fill="#3e3e3e" stroke="#fff" />
        <path d="M586 236L702 150" />
        <path d="M74 603L210 493V525L92 618z" fill="#d0d0d0" stroke="none" />
        <path d="M74 603L210 493V510L82 608z" fill="#3e3e3e" stroke="#fff" />
        <path d="M92 618L210 522" />

        {/* channel walls */}
        <path d="M703 118L1480 715 1465 728 703 146z" fill="#dcdcdc" stroke="none" />
        <path d="M706 141L1468 724" strokeWidth="5" />
        <path d="M703 118L1482 716M712 115L1486 710" strokeWidth="1" />
        <path d="M580 236L1340 822 1465 728" />
        <path d="M210 492L990 1090 968 1110 210 525z" fill="#d5d5d5" stroke="none" />
        <path d="M212 515L975 1102" strokeWidth="5" />
        <path d="M210 492L990 1090 968 1108M222 494L984 1082" />
        <path d="M210 525L968 1110 850 1200 92 618z" fill="#42489e" stroke="#e6e6f4" />
        <path d="M78 608L848 1206" stroke="#fff" strokeWidth="3" />

        {/* pin */}
        <path d="M790 684L702 618q-10-16 2-28 10-8 20-2L790 638z" fill="#8f8f8f" />
        <path d="M714 604L790 662" stroke="#c9c9c9" strokeWidth="9" />
        <path d="M716 600L790 654" strokeWidth="4" />

        {/* boss */}
        <path d="M774 573V850C790 960 900 1023 1013 1023S1240 960 1252 850V573z" fill="url(#outerWall)" />
        <path d="M1181 690V968" />
        <ellipse cx="1013" cy="573" rx="239" ry="185" fill="#c6c6c6" />
        <ellipse cx="1013" cy="573" rx="216" ry="170" fill="url(#chamfer)" />
        <path d="M815 590C815 490 905 430 1013 430S1213 490 1213 590C1200 680 1100 738 1013 742 920 738 830 680 815 590z" fill="url(#innerWall)" />
        <path d="M890 712Q950 686 1013 685T1132 712Q1080 742 1013 742T890 712z" fill="#c4c4c6" />
        <path d="M832 545C860 490 940 462 1013 462S1180 500 1208 580M822 570C850 510 930 480 1013 480S1175 520 1212 590" />
        <path d="M815 600C840 530 930 488 1013 488S1180 530 1213 610" strokeWidth="2" />
        <path d="M864 458V530M870 470V700" strokeWidth="1" />
      </g>

      {/* axes */}
      <g>
        <path d="M46 472l17-11M46 472l18 12" stroke="#4b4b4b" strokeWidth="3" />
        <path d="M46 472v-22" stroke="#a8381f" strokeWidth="4" />
        <path d="M41 455l5-10 5 10q-5 4-10 0z" fill="#dc3a20" />
        <path d="M73 453l-9 11-6-6z" fill="#4f4f4f" />
        <path d="M74 491l-9-11-7 6z" fill="#4f4f4f" />
        <circle cx="46" cy="472" r="5" fill="#55585a" />
        <circle cx="45" cy="470" r="1.500" fill="#c9c9c9" />
      </g>
      <g fill="#111" fontSize="11">
        <text x="47" y="442">Z</text>
        <text x="73" y="450">Y</text>
        <text x="73" y="487">X</text>
      </g>
    </svg>
  );
}

/* ---------- geometry calculator ---------- */

const shapeTools = ['rectangle', 'circle', 'sector', 'segment', 'trapezoid', 'slot', 'triangle', 'wedge', 'square', 'fillet'];

function GeometryCalculator() {
  const [included, setIncluded] = useState(true);
  return (
    <section className="absolute top-[214px] right-[118px] bottom-[21px] left-[46%] flex flex-col border border-[#3c6690] bg-gradient-to-r from-[#b4cfec] to-[#8ca9da] shadow-[0_3px_16px_rgba(0,0,0,0.4)]">
      <TitleBar title="Geometry Calculator" active />
      <div className="mx-px mt-1 flex h-11 shrink-0 items-center rounded border-b border-[#3e4a63] bg-[#fafafe] pl-px">
        <ToolButton name="cut" label="Cut" tone="gray" />
        <ToolButton name="copy" label="Copy" tone="gray" />
        <ToolButton name="paste" label="Paste" tone="gray" />
        <ToolButton name="remove" label="Delete" tone="gray" />
        <ToolSeparator />
        <ToolButton name="locked" label="Lock" tone="gray" />
        <ToolButton name="unlocked" label="Unlock" tone="gray" />
        <OverflowArrow />
      </div>
      <div className="mx-px mt-[5px] flex h-[43px] shrink-0 items-center rounded border-b border-[#3e4a63] bg-[#fafafe] pl-px">
        <ToolButton name="hierarchy" label="Hierarchy" />
        <ToolSeparator />
        {shapeTools.map((s) => (
          <ToolButton key={s} name={s} label={s} />
        ))}
        <ToolSeparator />
        <ToolButton name="redCube" label="Surface area" />
        <OverflowArrow />
      </div>
      <div className="mx-px mt-1 flex min-h-0 flex-1 gap-1 rounded-sm bg-[#f9f9fe] pr-0.5 pl-1">
        <div className="flex w-[282px] shrink-0 flex-col gap-[5px] pt-0.5 pb-[3px]">
          <ul className={`${panelClass} flex-1 bg-white pt-1 pl-[22px] text-[11px] leading-4`}>
            <li className="w-fit rounded-[2px] bg-gradient-to-b from-[#cdeefa] to-[#a4dcf2] px-[3px] py-px font-bold">
              Area of surfaces in CAD model
            </li>
          </ul>
          <section className={`${panelClass} flex h-[55px] flex-col justify-between pt-[3px] pr-[9px] pb-[7px] pl-px`}>
            <div className="flex items-center gap-1">
              <Expander label="Collapse part projected area" />
              <h2 className="text-[11px] leading-4 text-[#4763bd]">Part projected area</h2>
            </div>
            <div className="flex items-center pl-[9px] text-[11px] leading-4">
              <span className="flex-1">Part projected area, in²</span>
              <span className="mr-10">1.283</span>
              <CheckBox checked={included} onChange={setIncluded} label="Use part projected area" />
            </div>
          </section>
        </div>
        <div className="mt-0.5 mb-[3px] w-0.5 shrink-0 bg-[#c1dbf4]" />
        <div className="flex min-w-0 flex-1 flex-col pt-1 pb-px">
          <div className="relative min-h-0 flex-1 overflow-hidden border border-[#80909c] bg-[#65a1d3]">
            <ViewToolbar />
            <PartModel />
          </div>
          <div className="mt-3.5 flex h-[62px] w-[295px] flex-col justify-end gap-1 rounded border border-[#e0e4f0] pr-[5px] pb-1.5 pl-2.5">
            <Field label="Repeat count" value="1" />
            <AreaField />
          </div>
        </div>
      </div>
      <footer className="flex h-[33px] shrink-0 items-center justify-end gap-2 border-t border-[#8d8f94] bg-gradient-to-r from-[#7ea6da] via-[#648fcb] to-[#6490cc] pr-1">
        <button type="button" className={`${buttonClass} h-[23px] w-[50px]`}>
          OK
        </button>
        <button type="button" className={`${buttonClass} h-[23px] w-[50px]`}>
          Cancel
        </button>
      </footer>
    </section>
  );
}

function AreaField() {
  return (
    <div className="flex h-5 items-center">
      <label htmlFor="area" className="flex-1 pt-0.5 text-[11px] leading-4">
        Area, in²
      </label>
      <button type="button" aria-label="Add area" className={`${buttonClass} mr-[5px] h-[17px] w-[17px]`}>
        <svg viewBox="0 0 9 9" className="h-[9px] w-[9px]" aria-hidden="true">
          <path d="M3.500 0h2v3.500H9v2H5.500V9h-2V5.500H0v-2h3.500z" />
        </svg>
      </button>
      <input id="area" defaultValue="1.283" className={`${boxClass} w-[60px] bg-white`} />
    </div>
  );
}

export default function App() {
  return (
    <main className="relative min-h-screen overflow-hidden bg-white font-['DejaVu_Sans_Condensed','Noto_Sans',sans-serif] text-black">
      <Defs />
      <MainWindow />
      <GeometryCalculator />
    </main>
  );
}
